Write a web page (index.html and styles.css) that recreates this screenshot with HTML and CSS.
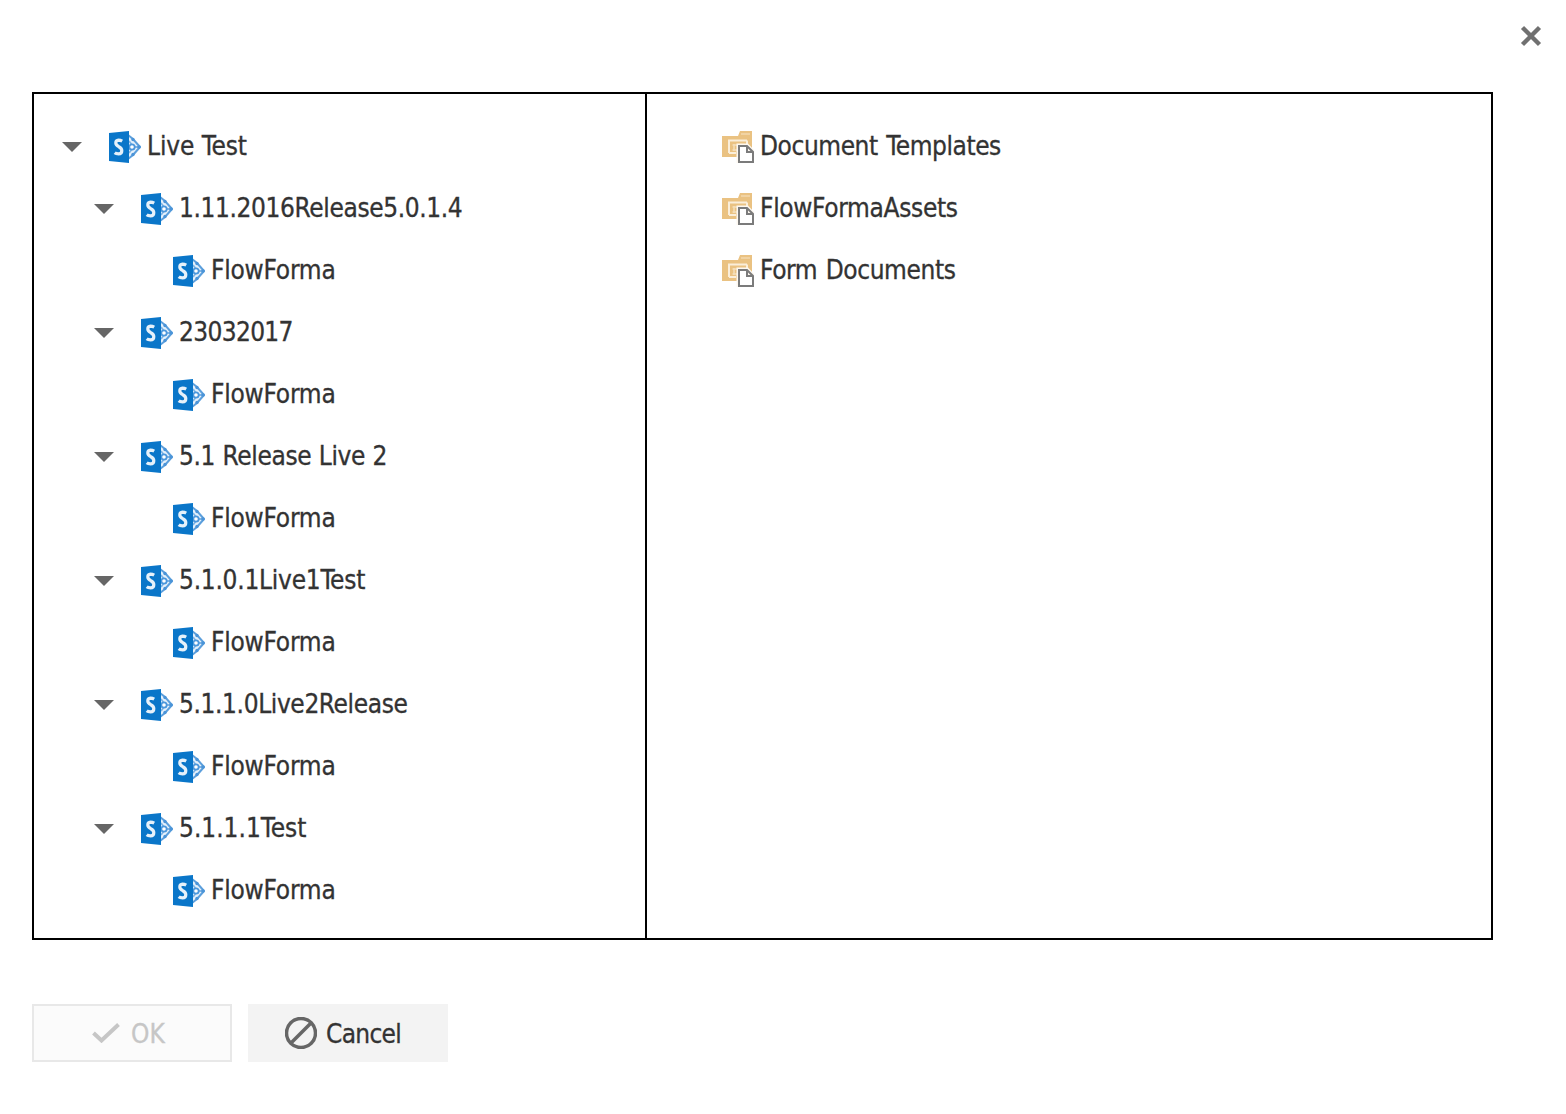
FILE: index.html
```html
<!DOCTYPE html>
<html lang="en">
<head>
<meta charset="utf-8">
<title>Select location</title>
<link rel="stylesheet" href="styles.css">
</head>
<body>
<svg class="defs" aria-hidden="true">
  <symbol id="site" viewBox="0 0 32 32">
    <path d="M19 4L24 8L31 16L24 24L19 28" fill="#e6f1fb" stroke="#5c9fdc" stroke-width="2"/>
    <path d="M26 16H30M20 10L23 14M20 22L23 18" fill="none" stroke="#7fb4e5" stroke-width="1.8"/>
    <circle cx="24" cy="8.500" r="1.700" fill="#4b94d8"/><circle cx="24" cy="23.500" r="1.700" fill="#4b94d8"/>
    <circle cx="23" cy="16" r="2.700" fill="#fff" stroke="#4b97dc" stroke-width="1.800"/>
    <circle cx="30" cy="16" r="1.800" fill="#4b94d8"/>
    <path d="M0 2L20 0V32L0 30Z" fill="#0a76c9"/>
    <path d="M13.200 10.200Q11.500 9.200 9.500 9.200Q6.800 9.400 6.800 12Q6.800 14 9.800 15.700Q12.800 17.200 12.800 19.700Q12.800 22.800 9.500 22.800Q7 22.800 5.700 21.700" fill="none" stroke="#e6f1fa" stroke-width="3.200"/>
  </symbol>
  <symbol id="library" viewBox="0 0 32 32">
    <path d="M0 5H16L18 0H30V26H0Z" fill="#eac282"/>
    <path d="M19 3H28" stroke="#f3d9ae" stroke-width="1.500"/>
    <path d="M7 22V9.500H25" fill="none" stroke="#faeeda" stroke-width="2"/>
    <path d="M7 22H14M25 9.500V13" stroke="#faeeda" stroke-width="2"/>
    <path d="M10.500 14H22M10.500 19H16M12 13V20M17 13V18" stroke="#f5dfba" stroke-width="1.500"/>
    <path d="M14.500 12.500H26L32 19V32H14.500Z" fill="#fdf8f0"/>
    <path d="M17 15H25L31 21V31H17ZM25 15V21H31" fill="#fff" stroke="#7b7b7b" stroke-width="2"/>
  </symbol>
</svg>
<main class="dialog">
  <header class="top"><svg class="close" viewBox="0 0 22 22"><path d="M2.500 2.500L19.500 19.500M19.500 2.500L2.500 19.500"/></svg></header>
  <section class="panel">
    <div class="tree">
      <div class="row"><i class="arrow"></i><svg class="icon"><use href="#site"/></svg><span class="root">Live Test</span></div>
      <div class="row child"><i class="arrow"></i><svg class="icon"><use href="#site"/></svg><span class="rel1">1.11.2016Release5.0.1.4</span></div>
      <div class="row leaf"><svg class="icon"><use href="#site"/></svg><span class="ff">FlowForma</span></div>
      <div class="row child"><i class="arrow"></i><svg class="icon"><use href="#site"/></svg><span class="rel2">23032017</span></div>
      <div class="row leaf"><svg class="icon"><use href="#site"/></svg><span class="ff">FlowForma</span></div>
      <div class="row child"><i class="arrow"></i><svg class="icon"><use href="#site"/></svg><span class="rel3">5.1 Release Live 2</span></div>
      <div class="row leaf"><svg class="icon"><use href="#site"/></svg><span class="ff">FlowForma</span></div>
      <div class="row child"><i class="arrow"></i><svg class="icon"><use href="#site"/></svg><span class="rel4">5.1.0.1Live1Test</span></div>
      <div class="row leaf"><svg class="icon"><use href="#site"/></svg><span class="ff">FlowForma</span></div>
      <div class="row child"><i class="arrow"></i><svg class="icon"><use href="#site"/></svg><span class="rel5">5.1.1.0Live2Release</span></div>
      <div class="row leaf"><svg class="icon"><use href="#site"/></svg><span class="ff">FlowForma</span></div>
      <div class="row child"><i class="arrow"></i><svg class="icon"><use href="#site"/></svg><span class="rel6">5.1.1.1Test</span></div>
      <div class="row leaf"><svg class="icon"><use href="#site"/></svg><span class="ff">FlowForma</span></div>
    </div>
    <div class="files">
      <div class="row"><svg class="icon"><use href="#library"/></svg><span class="lib1">Document Templates</span></div>
      <div class="row"><svg class="icon"><use href="#library"/></svg><span class="lib2">FlowFormaAssets</span></div>
      <div class="row"><svg class="icon"><use href="#library"/></svg><span class="lib3">Form Documents</span></div>
    </div>
  </section>
  <footer class="actions">
    <button class="btn ok" disabled><svg class="check" viewBox="0 0 28 20"><path d="M1.500 10L9.500 17.500L26.500 1.500"/></svg><span>OK</span></button>
    <button class="btn cancel"><svg class="ban" viewBox="0 0 32 32"><circle cx="16" cy="16" r="14.500"/><path d="M6 26L26 6"/></svg><span>Cancel</span></button>
  </footer>
</main>
</body>
</html>
```
FILE: styles.css
```css
* { box-sizing: border-box; }
body {
  margin: 0;
  background: #fff;
  color: #333;
  font: 26px/32px "DejaVu Sans Condensed", "DejaVu Sans", sans-serif;
  font-stretch: condensed;
  -webkit-text-stroke: 0.3px currentColor;
}
.defs { position: absolute; width: 0; height: 0; }
.dialog { height: 1114px; padding-left: 32px; }
.top { height: 92px; display: flex; justify-content: flex-end; padding: 25px 24px 0 0; }
.close { width: 22px; height: 22px; fill: none; stroke: #707070; stroke-width: 4.4; }
.panel { display: flex; width: 1461px; height: 848px; border: 2px solid #000; }
.tree { width: 613px; border-right: 2px solid #000; padding: 22px 0 0 28px; }
.files { flex: 1; padding: 22px 0 0 75px; }
.row { display: flex; align-items: center; height: 62px; white-space: nowrap; }
.row span { margin: -2px 0 0 6px; }
.child { padding-left: 32px; }
.leaf { padding-left: 111px; }
.icon { width: 32px; height: 32px; flex: none; }
.arrow { width: 20px; height: 10px; margin-right: 27px; background: #666; clip-path: polygon(0 0, 100% 0, 50% 100%); }
.root { letter-spacing: -0.1px; }
.ff { letter-spacing: -0.22px; }
.rel1, .rel5 { letter-spacing: -0.38px; }
.rel2 { letter-spacing: -0.65px; }
.rel3 { letter-spacing: -0.35px; word-spacing: 0.3px; }
.rel4 { letter-spacing: -0.25px; }
.lib1 { letter-spacing: -0.43px; word-spacing: 1.5px; }
.lib2 { letter-spacing: -0.33px; }
.lib3 { letter-spacing: -0.4px; word-spacing: 1.5px; }
.actions { display: flex; gap: 16px; margin-top: 64px; }
.btn { display: flex; align-items: center; width: 200px; height: 58px; padding: 0; border: 0; border-radius: 0; background: #f3f3f3; color: #333; font: inherit; }
.btn span { padding-top: 2px; }
.ok { padding-left: 58px; border: 2px solid #e8e8e8; background: #fbfbfb; color: #c6c6c6; }
.cancel { padding-left: 37px; letter-spacing: -0.7px; }
.check { width: 28px; height: 20px; margin-right: 11px; fill: none; stroke: #c6c6c6; stroke-width: 4; }
.ban { width: 32px; height: 32px; margin-right: 9px; fill: none; stroke: #666; stroke-width: 3.500; }
```
